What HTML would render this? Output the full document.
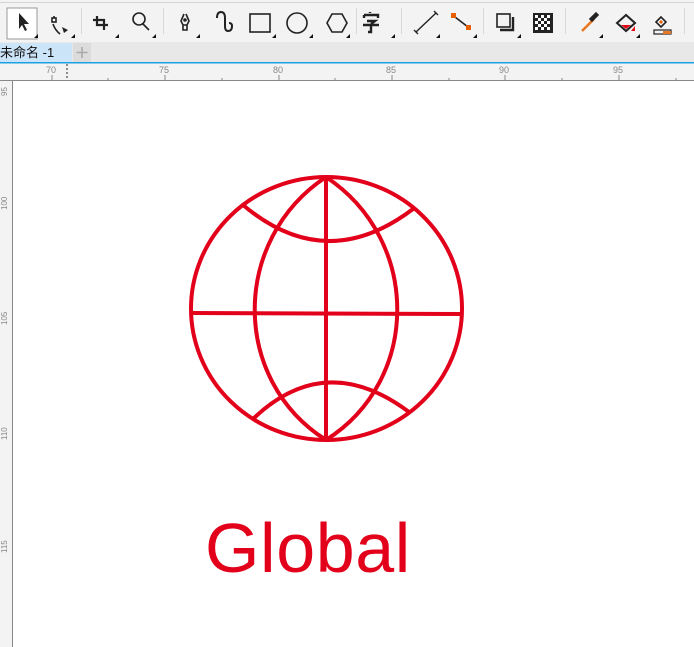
<!DOCTYPE html>
<html><head><meta charset="utf-8"><style>
html,body{margin:0;padding:0;width:694px;height:647px;overflow:hidden;background:#fff;font-family:"Liberation Sans","Noto Sans CJK SC",sans-serif;}
</style></head><body>
<svg width="694" height="647" xmlns="http://www.w3.org/2000/svg" style="display:block">
<!-- toolbar -->
<rect x="0" y="0" width="694" height="42" fill="#f3f3f3"/>
<rect x="0" y="2" width="694" height="1" fill="#d4d4d4"/>
<rect x="7" y="8" width="30" height="31" fill="#fff" stroke="#999" stroke-width="1"/>
<g fill="none" stroke="#222" stroke-width="1.6">
<path d="M19 13 L19 29 L22 25 L25 31 L27 30 L24 24 L29 24 Z" fill="#222" stroke="none"/>
<path d="M54 16 v6 M53 24 q2 6 7 10" /><rect x="52" y="18" width="4" height="4" fill="#fff"/>
<path d="M62 27 l6 3 -4 3z" fill="#222" stroke="none"/>
<path d="M97 16 v9 h11 M93 20 h11 v10" stroke-width="2.2"/>
<circle cx="139" cy="19" r="6"/><path d="M143 24 l6 6"/>
<path d="M184 14 l-3 7 2 4 h4 l2 -4 -3 -7 M183 25 v5 h4 v-5" /><circle cx="185" cy="20" r="1" fill="#222"/>
<path d="M217 18 q0 -6 4 -6 q4 0 4 6 v8 q0 5 3 5 q4 0 4 -5 q0 -3 -3 -3" stroke-width="2"/>
<rect x="250" y="14" width="20" height="18"/>
<circle cx="297" cy="23" r="10"/>
<path d="M327 23 l5 -9 h10 l5 9 -5 9 h-10 z"/>
<path d="M370 13 v-1 M364 15 h14 v3 M364 18 v-3 M367 21 h8 l-4 3 M363 25 h16 M371 24 v8 h-3" stroke-width="2.4"/>
<path d="M416 32 l20 -19 M414 30 l4 4 M434 11 l4 4" stroke-width="1.4"/>
<path d="M455 17 l13 10"/>
<rect x="497" y="14" width="13" height="13" stroke-width="1.6"/><path d="M500 30 h13 v-13" stroke-width="2.4"/>
<path d="M582 31 l12 -12" stroke="#e87722" stroke-width="2.6"/><path d="M590 19 l6 -6 l2 2 -6 6z" fill="#222"/>
<path d="M626 15 l-9 8 9 8 9 -8z" stroke-width="2"/>
<path d="M661 17 l-5 5 5 5 5 -5z" stroke-width="1.6"/><rect x="654" y="30" width="17" height="4" stroke-width="1.2"/>
</g>
<rect x="451" y="13" width="5" height="5" fill="#e65f00"/><rect x="466" y="25" width="5" height="5" fill="#e65f00"/>
<path d="M621 25 h10 l-5 4z" fill="#e30613"/><path d="M631 31 l4 -5 v5z" fill="#e30613"/>
<rect x="663" y="31" width="8" height="3" fill="#e87722"/><path d="M661 20 l2 2 -2 2 -2 -2z" fill="#e65f00"/>
<g fill="#444">
<rect x="533" y="13" width="20" height="20" fill="#222"/>
</g>
<g fill="#fff">
<rect x="535" y="15" width="3" height="3"/><rect x="541" y="15" width="3" height="3"/><rect x="547" y="15" width="3" height="3"/>
<rect x="538" y="18" width="3" height="3"/><rect x="544" y="18" width="3" height="3"/>
<rect x="535" y="21" width="3" height="3"/><rect x="541" y="21" width="3" height="3"/><rect x="547" y="21" width="3" height="3"/>
<rect x="538" y="24" width="3" height="3"/><rect x="544" y="24" width="3" height="3"/>
<rect x="535" y="27" width="3" height="3"/><rect x="541" y="27" width="3" height="3"/><rect x="547" y="27" width="3" height="3"/>
</g>
<g fill="#111">
<path d="M38 34 l-4 4 h4z"/><path d="M75 34 l-4 4 h4z"/><path d="M119 34 l-4 4 h4z"/><path d="M156 34 l-4 4 h4z"/>
<path d="M200 34 l-4 4 h4z"/><path d="M276 34 l-4 4 h4z"/><path d="M313 34 l-4 4 h4z"/><path d="M350 34 l-4 4 h4z"/>
<path d="M395 34 l-4 4 h4z"/><path d="M440 34 l-4 4 h4z"/><path d="M477 34 l-4 4 h4z"/><path d="M521 34 l-4 4 h4z"/>
<path d="M603 34 l-4 4 h4z"/><path d="M640 34 l-4 4 h4z"/>
</g>
<g fill="#d8d8d8"><rect x="81" y="8" width="1" height="26"/><rect x="163" y="8" width="1" height="26"/><rect x="356" y="8" width="1" height="26"/><rect x="401" y="8" width="1" height="26"/><rect x="483" y="8" width="1" height="26"/><rect x="565" y="8" width="1" height="26"/><rect x="684" y="8" width="1" height="26"/></g>
<!-- tab bar -->
<rect x="0" y="42" width="694" height="20" fill="#e8e8e8"/>
<rect x="0" y="43" width="72" height="19" fill="#cce4f7"/>
<text x="0" y="57" font-size="13" fill="#111">未命名 -1</text>
<rect x="73" y="43" width="18" height="19" fill="#dcdcdc"/>
<path d="M82 47 v11 M76.5 52.5 h11" stroke="#aaa" stroke-width="1.6"/>
<rect x="0" y="62" width="694" height="1.5" fill="#1ba1e2"/>
<!-- rulers -->
<rect x="0" y="63.5" width="694" height="17" fill="#f3f3f3"/>
<rect x="0" y="63.5" width="12" height="583.5" fill="#f3f3f3"/>
<g font-size="9" fill="#888">
<text x="46" y="73">70</text><text x="159" y="73">75</text><text x="273" y="73">80</text><text x="386" y="73">85</text><text x="499" y="73">90</text><text x="613" y="73">95</text>
</g>
<g stroke="#888" stroke-width="1">
<path d="M52 75 v5 M165 75 v5 M279 75 v5 M392 75 v5 M505 75 v5 M619 75 v5"/>
<path d="M108 78 v2 M222 78 v2 M335 78 v2 M449 78 v2 M562 78 v2 M676 78 v2"/>
</g>
<path d="M67 64 v16" stroke="#222" stroke-dasharray="2 2"/>
<rect x="0" y="80" width="694" height="1" fill="#888"/>
<rect x="12" y="80" width="1" height="567" fill="#888"/>
<g font-size="8" fill="#888">
<text transform="translate(7,96) rotate(-90)">95</text><text transform="translate(7,210) rotate(-90)">100</text><text transform="translate(7,325) rotate(-90)">105</text><text transform="translate(7,440) rotate(-90)">110</text><text transform="translate(7,553) rotate(-90)">115</text>
</g>
<rect x="13" y="81" width="681" height="566" fill="#fff"/>
<!-- globe -->
<g fill="none" stroke="#e2001a" stroke-width="4">
<ellipse cx="326.5" cy="308.5" rx="135.5" ry="131.5"/>
<path d="M326 177 V440"/>
<path d="M191 313 L462 314"/>
<path d="M326 177 C231 240 231 380 326 440"/>
<path d="M326 177 C421 240 421 380 326 440"/>
<path d="M243 205 Q326 275 413 209"/>
<path d="M254 418 Q326 350 409 412"/>
</g>
<text x="205" y="572" font-size="70" fill="#e2001a" letter-spacing="0.6">Global</text>
</svg>
</body></html>
